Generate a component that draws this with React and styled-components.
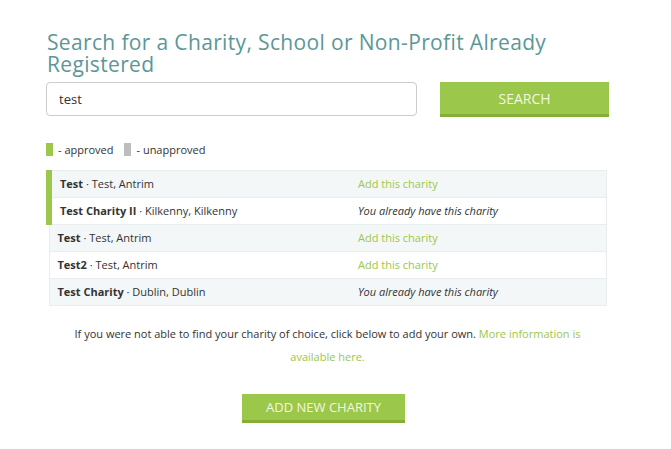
import React from "react";
import styled, { createGlobalStyle } from "styled-components";

const Global = createGlobalStyle`
  html, body { margin: 0; padding: 0; background: #fff; }
  body { font-family: "Open Sans", "Liberation Sans", sans-serif; color: #333; }
`;

const Page = styled.div`
  width: 563px;
  margin-left: 46px;
  padding-top: 31px;
`;

const Title = styled.h2`
  margin: 0 0 0 1px;
  font-family: "Open Sans", sans-serif;
  font-weight: 400;
  font-size: 21px;
  letter-spacing: 0.35px;
  line-height: 22px;
  color: #5c9797;
`;

const SearchRow = styled.div`
  display: flex;
  align-items: flex-start;
  gap: 23px;
  margin-top: 7px;
`;

const Input = styled.input`
  box-sizing: border-box;
  width: 371px;
  height: 34px;
  border: 1px solid #ccc;
  border-radius: 4px;
  padding: 0 12px;
  font-family: "Open Sans", sans-serif;
  font-size: 13px;
  color: #333;
  outline: none;
`;

const GreenButton = styled.button`
  box-sizing: border-box;
  width: ${(p) => p.$w}px;
  height: ${(p) => p.$h}px;
  background: #9bc74a;
  border: none;
  border-bottom: 3px solid #86ad36;
  color: #f2f7e0;
  font-family: "Open Sans", sans-serif;
  font-size: ${(p) => p.$fs || 13}px;
  text-transform: uppercase;
  padding: 0;
  cursor: pointer;
`;

const Legend = styled.div`
  display: flex;
  align-items: center;
  margin-top: 25px;
  font-size: 11px;
  color: #333;
`;

const Swatch = styled.span`
  display: inline-block;
  width: 7px;
  height: 13px;
  background: ${(p) => p.$c};
  margin-right: 5px;
  margin-left: ${(p) => p.$ml || 0}px;
`;

const Table = styled.table`
  border-collapse: collapse;
  margin: 13px 0 0 0;
  width: 561px;
  font-size: 11px;
`;

const Row = styled.tr`
  background: ${(p) => (p.$odd ? "#f4f7f8" : "#fff")};
`;

const Cell = styled.td`
  height: 25px;
  padding: 0 8px 1px;
  border: 1px solid #e8edef;
  border-left-color: ${(p) => (p.$first ? (p.$approved ? "#9bc74a" : "#e8edef") : "transparent")};
  border-left-width: ${(p) => (p.$first && p.$approved ? 6 : 1)}px;
  border-right-color: ${(p) => (p.$first ? "transparent" : "#e8edef")};
  width: ${(p) => (p.$first ? "281px" : "auto")};
  white-space: nowrap;
`;

const Name = styled.b`
  font-weight: 700;
`;

const AddLink = styled.a`
  color: #9bc74a;
  text-decoration: none;
`;

const Have = styled.i`
  font-style: italic;
`;

const Info = styled.p`
  margin: 16px 0 0;
  padding: 0 22px;
  text-align: center;
  font-size: 11px;
  line-height: 23px;
  color: #333;
`;

const Center = styled.div`
  display: flex;
  justify-content: center;
  margin-top: 26px;
  padding-right: 8px;
`;

const rows = [
  { name: "Test", loc: "Test, Antrim", approved: true, have: false },
  { name: "Test Charity II", loc: "Kilkenny, Kilkenny", approved: true, have: true },
  { name: "Test", loc: "Test, Antrim", approved: false, have: false },
  { name: "Test2", loc: "Test, Antrim", approved: false, have: false },
  { name: "Test Charity", loc: "Dublin, Dublin", approved: false, have: true },
];

export default function App() {
  return (
    <>
      <Global />
      <Page>
        <Title>Search for a Charity, School or Non-Profit Already Registered</Title>
        <SearchRow>
          <Input defaultValue="test" />
          <GreenButton $w={169} $h={35} $fs={14}>Search</GreenButton>
        </SearchRow>
        <Legend>
          <Swatch $c="#9bc74a" />- approved
          <Swatch $c="#bdbdbd" $ml={11} />- unapproved
        </Legend>
        <Table>
          <tbody>
            {rows.map((r, i) => (
              <Row key={i} $odd={i % 2 === 0}>
                <Cell $first $approved={r.approved}>
                  <Name>{r.name}</Name> · {r.loc}
                </Cell>
                <Cell>
                  {r.have ? <Have>You already have this charity</Have> : <AddLink href="#">Add this charity</AddLink>}
                </Cell>
              </Row>
            ))}
          </tbody>
        </Table>
        <Info>
          If you were not able to find your charity of choice, click below to add your own.{" "}
          <AddLink href="#">More information is available here.</AddLink>
        </Info>
        <Center>
          <GreenButton $w={163} $h={29}>Add new charity</GreenButton>
        </Center>
      </Page>
    </>
  );
}
